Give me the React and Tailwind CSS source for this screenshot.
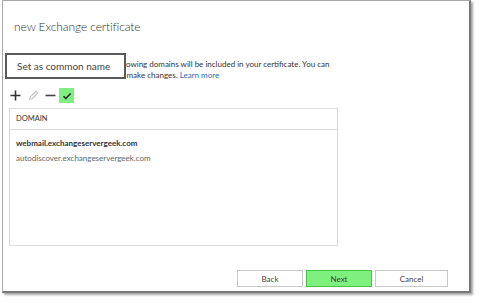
export default function App() {
  const font = { fontFamily: 'Lato, "Open Sans", sans-serif' };
  return (
    <div className="relative w-[480px] h-[303px] bg-white overflow-hidden" style={font}>
      <div className="ml-[2px] w-[469px] h-[293px] bg-white border-l border-t border-[#a8a8a8] border-r-2 border-r-[#7a7a7a] border-b-2 border-b-[#7a7a7a] shadow-[2px_2px_2px_rgba(0,0,0,0.35)] flex flex-col">
        <div className="pl-[11px] pt-[17px] text-[12px] leading-[18px] font-light tracking-[-0.1px] text-[#333]">
          new Exchange certificate
        </div>
        <div className="pl-[11px] mt-[23px] text-[8px] leading-[11px] text-[#333]">
          <div className="whitespace-nowrap">Based on your selection, the following domains will be included in your certificate. You can</div>
          <div className="whitespace-nowrap">
            add, edit or remove domains, or make changes. <span className="text-[#1f6db5]">Learn more</span>
          </div>
        </div>
        <div className="flex items-center pl-[7px] mt-[7px] h-[15px]">
          <svg width="11" height="11" viewBox="0 0 11 11">
            <path d="M5.5 0.5v10M0.5 5.5h10" stroke="#333" strokeWidth="1.6" />
          </svg>
          <svg width="11" height="11" viewBox="0 0 11 11" className="ml-[7px]">
            <path d="M1.5 9.5l1-3 5.5-5.5 2 2-5.5 5.5z" fill="none" stroke="#c4c4c4" strokeWidth="1.1" />
          </svg>
          <svg width="11" height="11" viewBox="0 0 11 11" className="ml-[6px]">
            <path d="M0.5 5.5h10" stroke="#444" strokeWidth="1.6" />
          </svg>
          <div className="ml-[3px] w-[15px] h-[15px] bg-[#80ee80] flex items-center justify-center">
            <svg width="10" height="10" viewBox="0 0 10 10">
              <path d="M1.5 5.2l2.3 2.3 4.8-5" fill="none" stroke="#222" strokeWidth="1.5" />
            </svg>
          </div>
        </div>
        <div className="ml-[6px] mt-[5px] w-[329px] h-[138px] border border-[#dcdcdc] flex flex-col">
          <div className="h-[21px] border-b border-[#dcdcdc] pl-[6px] flex items-center text-[7.5px] text-[#333]">
            DOMAIN
          </div>
          <div className="pl-[6px] pt-[6px] text-[8px] leading-[15px]">
            <div className="font-bold text-[#333]">webmail.exchangeservergeek.com</div>
            <div className="text-[#666]">autodiscover.exchangeservergeek.com</div>
          </div>
        </div>
        <div className="flex gap-[3px] ml-[234px] mt-[24px] text-[8px] text-[#444]">
          <div className="w-[66px] h-[17px] border border-[#c8c8c8] bg-white flex items-center justify-center">Back</div>
          <div className="w-[66px] h-[17px] border border-[#4cc04c] bg-[#7ef07e] flex items-center justify-center">Next</div>
          <div className="w-[73px] h-[17px] border border-[#c8c8c8] bg-white flex items-center justify-center">Cancel</div>
        </div>
      </div>
      <div className="absolute left-[5px] top-[53px] w-[121px] h-[26px] bg-white border-2 border-[#5a5a5a] flex items-center pl-[10px] text-[10px] font-normal text-[#444] whitespace-nowrap">
        Set as common name
      </div>
    </div>
  );
}
